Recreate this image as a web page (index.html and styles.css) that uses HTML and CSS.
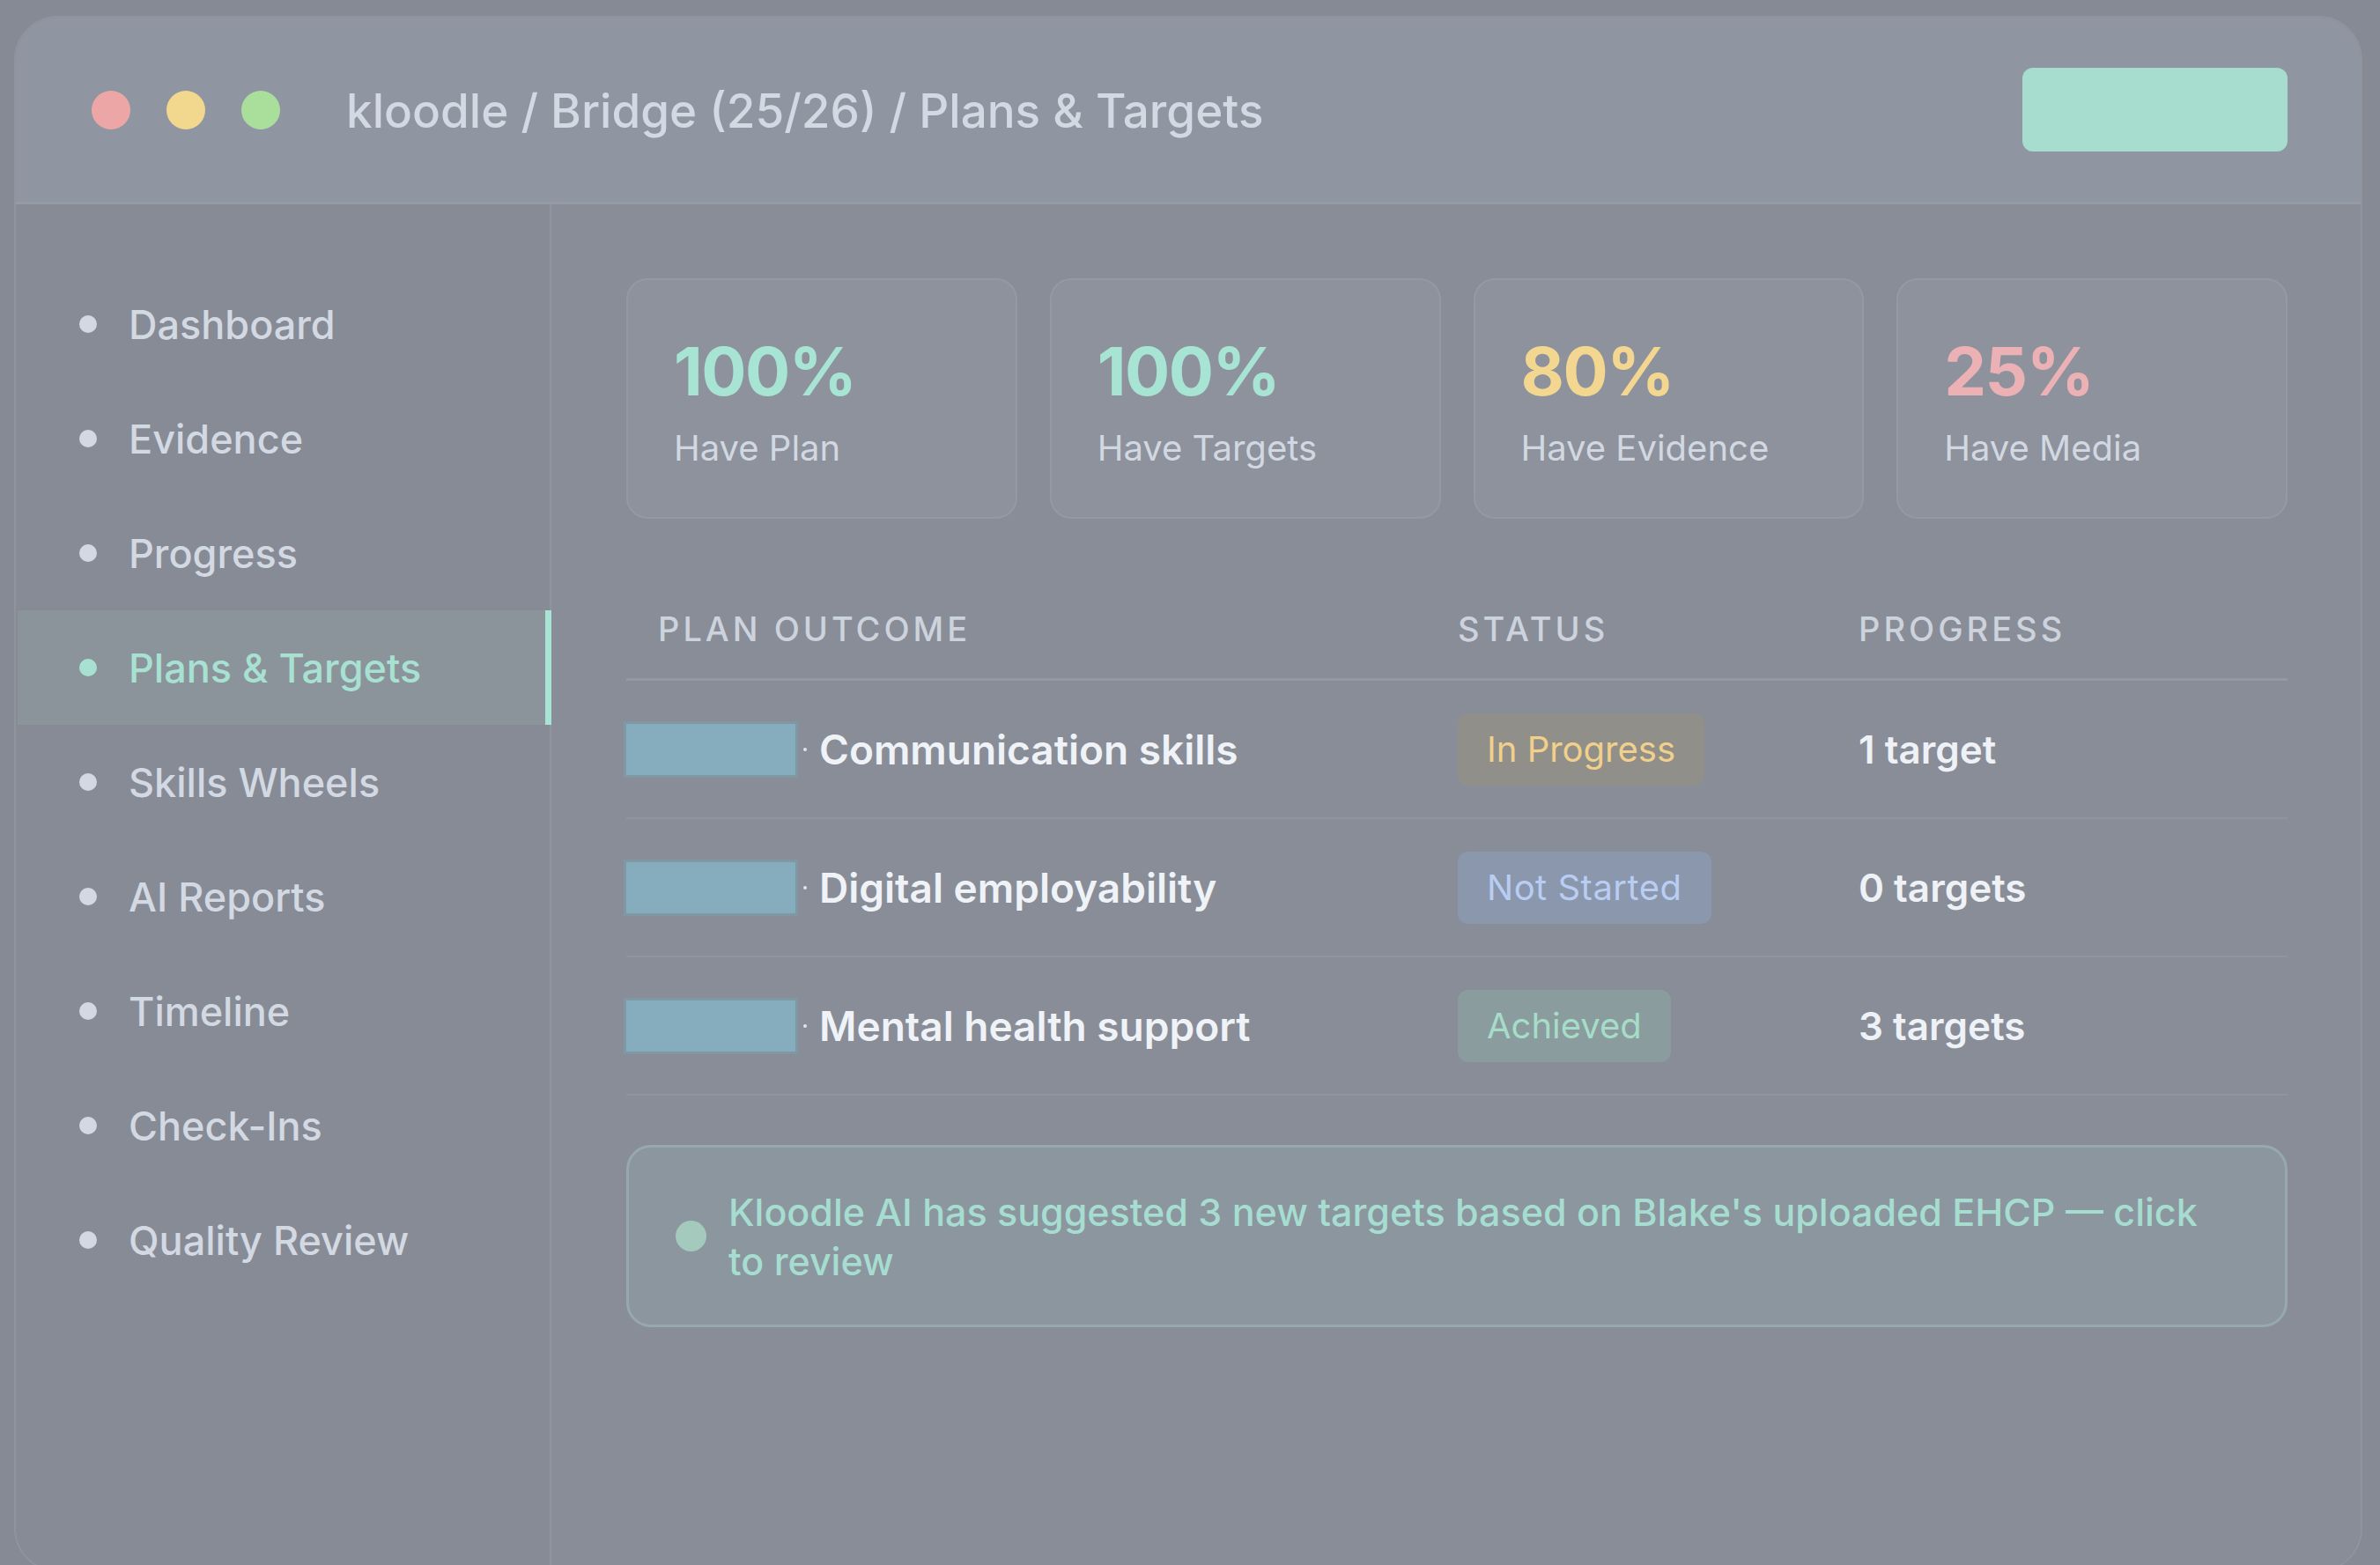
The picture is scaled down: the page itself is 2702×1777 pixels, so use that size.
FILE: index.html
```html
<!DOCTYPE html>
<html lang="en">
<head>
<meta charset="utf-8">
<title>kloodle / Bridge (25/26) / Plans &amp; Targets</title>
<link rel="stylesheet" href="styles.css">
</head>
<body>
<div class="window">
  <header class="titlebar">
    <div class="lights">
      <span class="light red"></span>
      <span class="light yellow"></span>
      <span class="light green"></span>
    </div>
    <div class="crumbs">kloodle / Bridge (25/26) / Plans &amp; Targets</div>
    <div class="spacer"></div>
    <div class="action"></div>
  </header>
  <div class="body">
    <nav class="sidebar">
      <div class="nav-item"><span class="bullet"></span>Dashboard</div>
      <div class="nav-item"><span class="bullet"></span>Evidence</div>
      <div class="nav-item"><span class="bullet"></span>Progress</div>
      <div class="nav-item active"><span class="bullet"></span>Plans &amp; Targets</div>
      <div class="nav-item"><span class="bullet"></span>Skills Wheels</div>
      <div class="nav-item"><span class="bullet"></span>AI Reports</div>
      <div class="nav-item"><span class="bullet"></span>Timeline</div>
      <div class="nav-item"><span class="bullet"></span>Check-Ins</div>
      <div class="nav-item"><span class="bullet"></span>Quality Review</div>
    </nav>
    <main class="main">
      <section class="stats">
        <div class="stat"><div class="stat-value mint">100%</div><div class="stat-label">Have Plan</div></div>
        <div class="stat"><div class="stat-value mint">100%</div><div class="stat-label">Have Targets</div></div>
        <div class="stat"><div class="stat-value amber">80%</div><div class="stat-label">Have Evidence</div></div>
        <div class="stat"><div class="stat-value rose">25%</div><div class="stat-label">Have Media</div></div>
      </section>
      <section class="table">
        <div class="row head">
          <div class="cell first">PLAN OUTCOME</div>
          <div class="cell">STATUS</div>
          <div class="cell">PROGRESS</div>
        </div>
        <div class="row">
          <div class="cell outcome"><span class="thumb"></span><span class="thumb-dot"></span>Communication skills</div>
          <div class="cell"><span class="pill progress">In Progress</span></div>
          <div class="cell count">1 target</div>
        </div>
        <div class="row">
          <div class="cell outcome"><span class="thumb"></span><span class="thumb-dot"></span>Digital employability</div>
          <div class="cell"><span class="pill notstarted">Not Started</span></div>
          <div class="cell count">0 targets</div>
        </div>
        <div class="row">
          <div class="cell outcome"><span class="thumb"></span><span class="thumb-dot"></span>Mental health support</div>
          <div class="cell"><span class="pill achieved">Achieved</span></div>
          <div class="cell count">3 targets</div>
        </div>
      </section>
      <section class="notice">
        <span class="notice-dot"></span>
        <p class="notice-text">Kloodle AI has suggested 3 new targets based on Blake's uploaded EHCP — click to review</p>
      </section>
    </main>
  </div>
</div>
</body>
</html>
```
FILE: styles.css
```css
html, body {
  margin: 0;
  padding: 0;
}
body {
  width: 2702px;
  height: 1777px;
  overflow: hidden;
  background: #868a94;
  font-family: "Inter", "Noto Sans", sans-serif;
}
.window {
  margin: 18px 20px 0 16px;
  height: 1767px;
  border: 2px solid #8f949e;
  border-radius: 50px;
  background: #878c97;
  overflow: hidden;
  display: flex;
  flex-direction: column;
  box-sizing: border-box;
}
.titlebar {
  height: 212px;
  flex: none;
  box-sizing: border-box;
  background: #8f96a2;
  border-bottom: 3px solid #959ba6;
  display: flex;
  align-items: center;
  padding: 0 83px 0 86px;
}
.lights {
  display: flex;
  gap: 41px;
}
.light {
  width: 44px;
  height: 44px;
  border-radius: 50%;
}
.red { background: #eda6a6; }
.yellow { background: #f2d78f; }
.green { background: #a9df9a; }
.crumbs {
  margin-left: 75px;
  color: #d3d9e3;
  font-size: 53px;
  font-weight: 500;
  letter-spacing: 0;
  padding-top: 2px;
}
.spacer { flex: 1; }
.action {
  width: 301px;
  height: 95px;
  border-radius: 12px;
  background: #a6ddcf;
}
.body {
  flex: 1;
  display: flex;
  min-height: 0;
}
.sidebar {
  width: 606px;
  flex: none;
  background: #878b96;
  border-right: 2px solid #8f95a0;
  padding-top: 71px;
  box-sizing: content-box;
}
.nav-item {
  height: 130px;
  display: flex;
  align-items: center;
  padding-left: 72px;
  color: #d3d9e2;
  font-size: 45px;
  font-weight: 500;
  position: relative;
}
.bullet {
  width: 20px;
  height: 20px;
  border-radius: 50%;
  background: #d3d9e2;
  margin-right: 36px;
  flex: none;
}
.nav-item.active {
  background: #8b949b;
  color: #a8e1d1;
  margin-left: 2px;
  padding-left: 70px;
}
.nav-item.active .bullet { background: #a8e1d1; }
.nav-item.active::after {
  content: "";
  position: absolute;
  right: -2px;
  top: 0;
  bottom: 0;
  width: 7px;
  background: #a8e3d3;
}
.main {
  flex: 1;
  background: #888d98;
  padding: 84px 83px 0 85px;
}
.stats {
  display: grid;
  grid-template-columns: repeat(4, 1fr);
  gap: 37px;
}
.stat {
  height: 273px;
  box-sizing: border-box;
  border: 2px solid #939aa5;
  border-radius: 24px;
  background: #8d929d;
  display: flex;
  flex-direction: column;
  justify-content: center;
  padding: 10px 52px 0;
}
.stat-value {
  font-size: 76px;
  font-weight: 700;
  line-height: 1;
  letter-spacing: -1.5px;
}
.mint { color: #a8e4d3; }
.amber { color: #f3d68f; }
.rose { color: #ecb1b5; }
.stat-label {
  margin-top: 26px;
  font-size: 40px;
  line-height: 48px;
  color: #d2d8e1;
}
.table {
  margin-top: 63px;
}
.row {
  display: grid;
  grid-template-columns: 944px 455px 1fr;
  height: 157px;
  box-sizing: border-box;
  border-bottom: 2px solid #8f95a0;
  align-items: center;
}
.row.head {
  height: 121px;
  padding-top: 6px;
  border-bottom: 3px solid #939aa4;
}
.head .cell {
  font-size: 38px;
  font-weight: 500;
  letter-spacing: 4px;
  color: #cdd3dc;
}
.head .cell.first { padding-left: 36px; }
.outcome {
  display: flex;
  align-items: center;
  font-size: 46px;
  font-weight: 600;
  color: #eff2f6;
}
.thumb {
  width: 192px;
  height: 58px;
  background: #86adbe;
  outline: 3px solid #7f98a3;
  flex: none;
}
.thumb-dot {
  width: 4px;
  height: 4px;
  border-radius: 50%;
  background: #dfe5ea;
  margin: 0 14px 0 9px;
  flex: none;
}
.pill {
  display: inline-block;
  font-size: 40px;
  line-height: 48px;
  padding: 17px 33px;
  border-radius: 12px;
}
.pill.progress { background: #918f89; color: #f1d08c; }
.pill.notstarted { background: #8a97ad; color: #b9cdf3; letter-spacing: 0.5px; }
.pill.achieved { background: #8a9c9d; color: #a6dcc8; }
.count {
  font-size: 44px;
  font-weight: 600;
  color: #eef1f5;
}
.notice {
  margin-top: 56px;
  height: 207px;
  box-sizing: border-box;
  border: 3px solid #98a9ad;
  border-radius: 28px;
  background: #8b969f;
  display: flex;
  align-items: center;
  padding: 0 90px 0 53px;
}
.notice-dot {
  width: 35px;
  height: 35px;
  border-radius: 50%;
  background: #a4c9bd;
  flex: none;
  margin-right: 25px;
}
.notice-text {
  margin: 0;
  font-size: 43px;
  line-height: 56px;
  color: #a6ddd0;
  font-weight: 500;
}
```
